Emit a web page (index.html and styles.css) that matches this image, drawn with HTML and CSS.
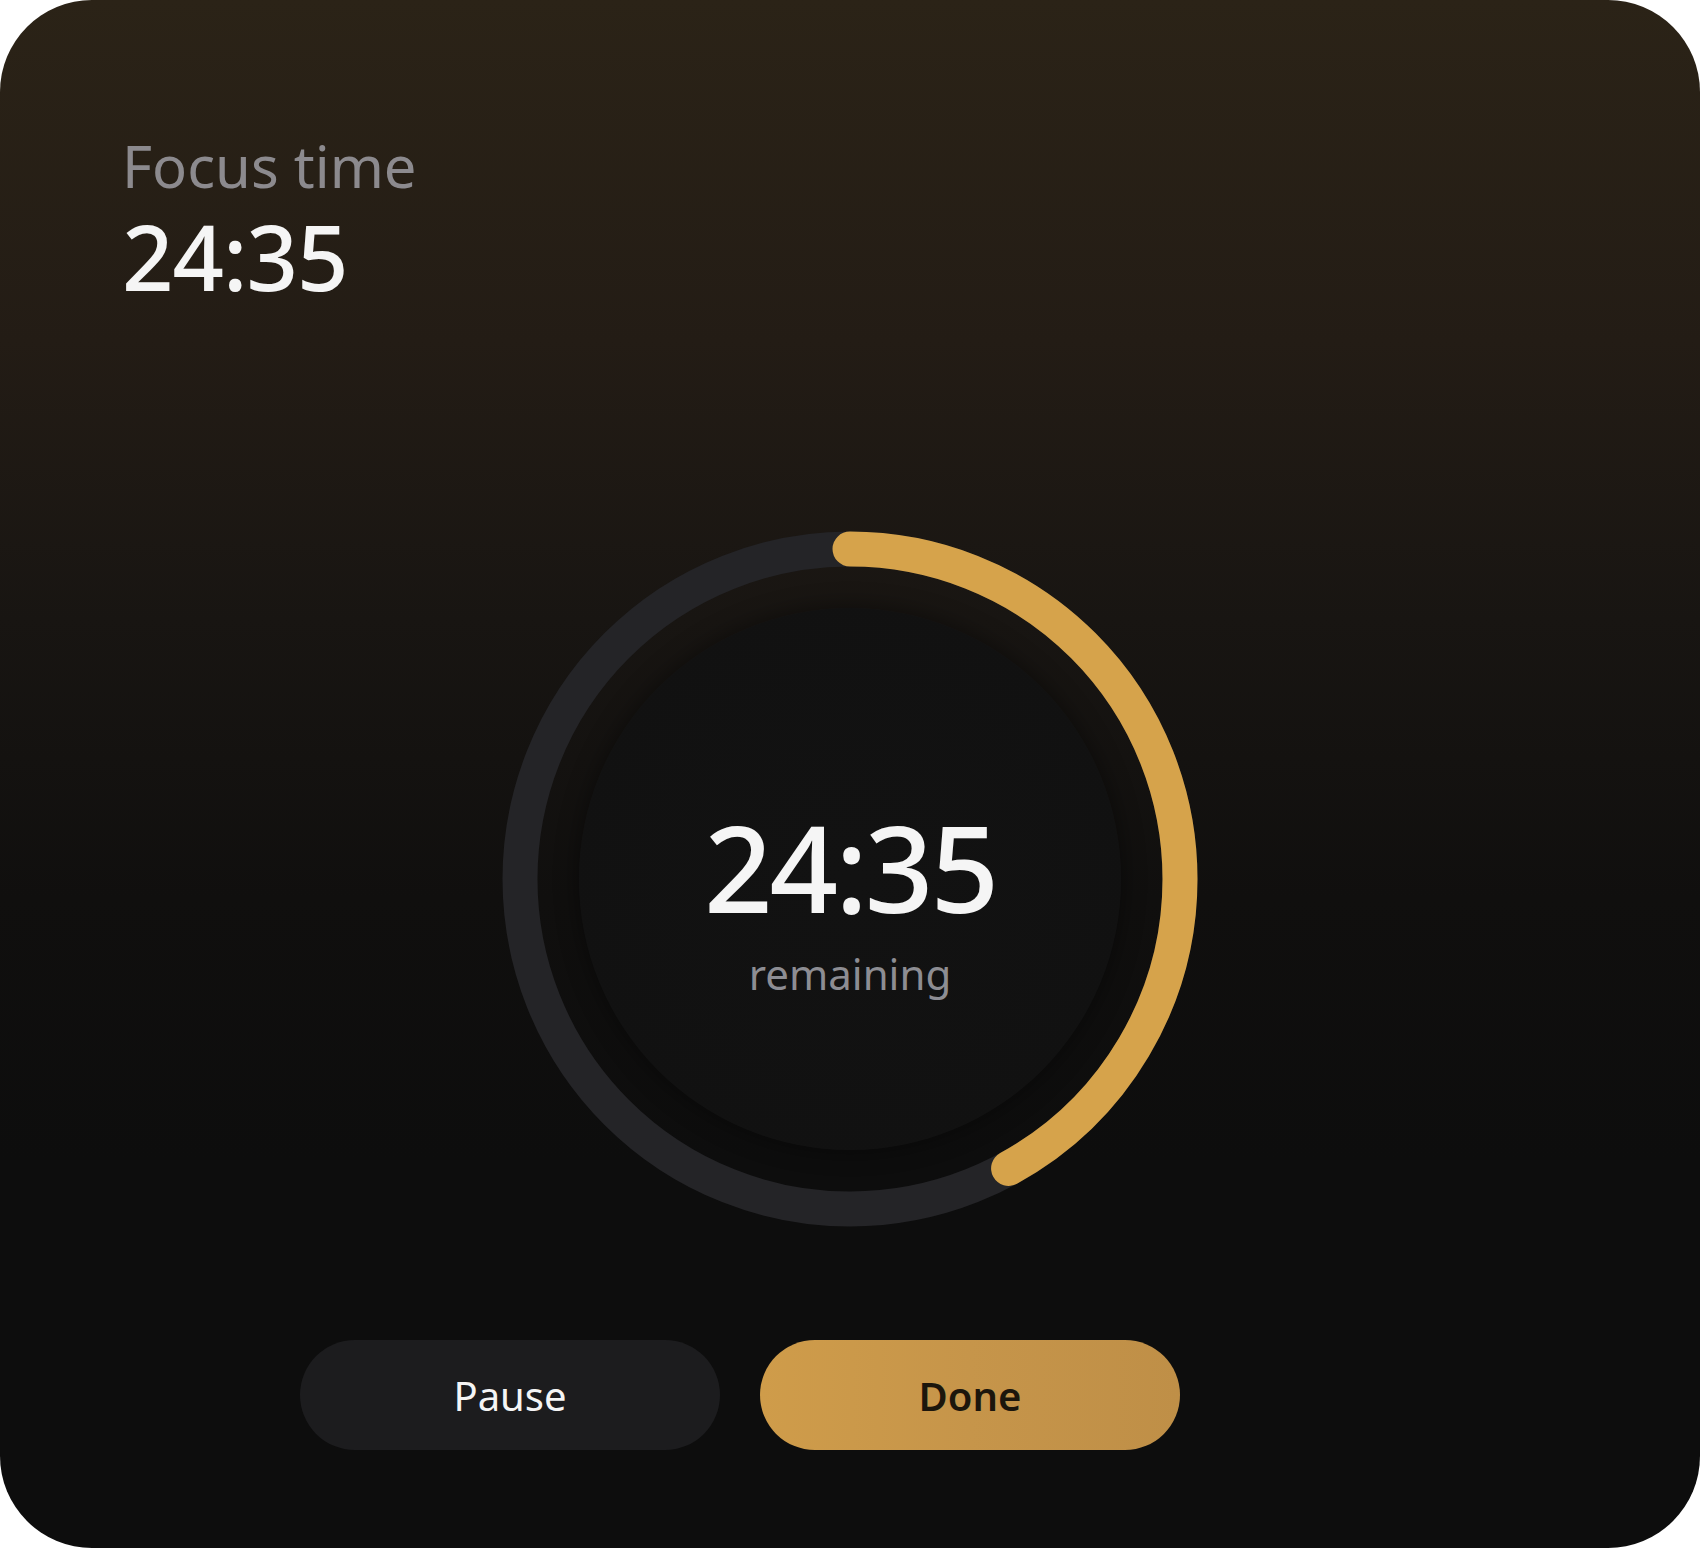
FILE: index.html
```html
<!DOCTYPE html>
<html lang="en">
<head>
    <meta charset="UTF-8">
    <meta name="viewport" content="width=device-width, initial-scale=1.0">
    <title>Focus Timer</title>
    <link rel="stylesheet" href="styles.css">
</head>
<body>
    <div class="card">
        <div class="header">
            <div class="label">Focus time</div>
            <div class="elapsed">24:35</div>
        </div>

        <!-- Progress dial -->
        <div class="dial">
            <svg class="ring" width="700" height="700" viewBox="0 0 700 700">
                <circle class="track" cx="350" cy="350" r="330"></circle>
                <circle class="progress" cx="350" cy="350" r="330"
                        stroke-dasharray="870.9 2073.5" transform="rotate(-90 350 350)"></circle>
            </svg>
            <div class="face"></div>
            <div class="readout">
                <div class="time">24:35</div>
                <div class="sub">remaining</div>
            </div>
        </div>

        <div class="actions">
            <button class="btn pause">Pause</button>
            <button class="btn done">Done</button>
        </div>
    </div>
</body>
</html>
```

FILE: styles.css
```css
body {
    margin: 0;
    padding: 0;
    background: #fff;
    font-family: "Noto Sans", "Open Sans", sans-serif;
}

.card {
    box-sizing: border-box;
    width: 1700px;
    height: 1548px;
    padding: 134px 122px 0;
    border-radius: 92px;
    background: linear-gradient(180deg, #2b2317 0%, #231c15 22%, #181512 40%, #100f0e 58%, #0d0d0d 75%, #0d0d0d 100%);
    display: flex;
    flex-direction: column;
    overflow: hidden;
}

.label {
    font-size: 58px;
    line-height: 64px;
    color: #8c8a8e;
}

.elapsed {
    margin-top: 13px;
    font-size: 90px;
    line-height: 1;
    font-weight: 500;
    color: #f5f5f5;
    letter-spacing: -1px;
}

.dial {
    position: relative;
    width: 700px;
    height: 700px;
    margin-top: 228px;
    align-self: center;
}

.ring {
    display: block;
}

.ring circle {
    fill: none;
    stroke-width: 35;
}

.track {
    stroke: #242427;
}

.progress {
    stroke: #d6a34b;
    stroke-linecap: round;
}

.face {
    position: absolute;
    left: 79px;
    top: 79px;
    width: 542px;
    height: 542px;
    border-radius: 50%;
    background: radial-gradient(circle, #121212 0%, #111 80%, #0c0c0c 96%, #0d0d0d 100%);
    box-shadow: 0 0 24px rgba(0, 0, 0, 0.45);
}

.readout {
    position: absolute;
    inset: 0;
    padding-top: 44px;
    box-sizing: border-box;
    display: flex;
    flex-direction: column;
    align-items: center;
    justify-content: center;
}

.time {
    font-size: 120px;
    line-height: 1;
    font-weight: 500;
    color: #f5f5f5;
    letter-spacing: -3px;
}

.sub {
    margin-top: 26px;
    font-size: 42px;
    line-height: 1;
    color: #8d8d93;
}

.actions {
    display: flex;
    gap: 40px;
    margin-top: 111px;
    margin-left: 178px;
}

.btn {
    width: 420px;
    height: 110px;
    border: none;
    border-radius: 55px;
    font-family: inherit;
    font-size: 40px;
    cursor: pointer;
}

.pause {
    background: #1c1c1e;
    color: #f5f5f5;
}

.done {
    background: linear-gradient(90deg, #cf9c4a 0%, #c6954a 50%, #bf8f47 100%);
    color: #1c160c;
    font-weight: 600;
}
```
